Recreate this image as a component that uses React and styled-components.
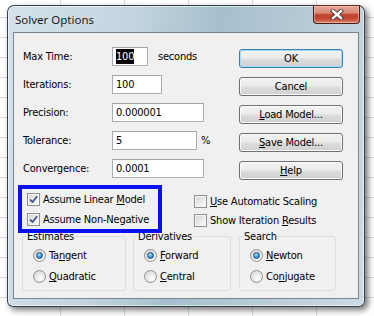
import React from "react";
import styled, { createGlobalStyle } from "styled-components";

const Global = createGlobalStyle`
  html, body { margin: 0; padding: 0; width: 374px; height: 316px; overflow: hidden; }
  body {
    background-color: #ffffff;
    background-image:
      linear-gradient(to right, #dadcdd 1px, transparent 1px),
      linear-gradient(to bottom, #dadcdd 1px, transparent 1px);
    background-size: 64px 100%, 100% 20px;
    background-position: 60px 0, 0 17px;
    font-family: "DejaVu Sans Condensed", "Liberation Sans", Arial, sans-serif;
    font-size: 11px;
    letter-spacing: -0.2px;
    color: #000;
  }
  #root { padding: 5px 0 0 7px; }
`;

const Window = styled.div`
  width: 358px;
  height: 302px;
  box-sizing: border-box;
  border: 1px solid rgba(35, 50, 62, 0.9);
  border-radius: 7px 7px 6px 6px;
  background: linear-gradient(100deg, #d5e2ea 0%, #c3d5e0 30%, #a7bfcd 52%, #b3c8d5 70%, #cddbe4 100%);
  box-shadow: inset 0 0 0 1px rgba(255, 255, 255, 0.55), 3px 3px 6px rgba(0, 0, 0, 0.55);
  display: flex;
  flex-direction: column;
`;

const TitleBar = styled.div`
  height: 26px;
  display: flex;
  align-items: center;
  justify-content: space-between;
  padding: 0 4px 0 7px;
`;

const Title = styled.div`
  font-family: "Noto Sans", "Open Sans", sans-serif;
  font-size: 11.5px;
  letter-spacing: 0;
  color: #1b1b1b;
  padding-top: 1px;
`;

const CloseButton = styled.div`
  align-self: flex-start;
  margin-top: -1px;
  width: 47px;
  height: 19px;
  box-sizing: border-box;
  border: 1px solid #4a1d14;
  border-top-color: #6a2a1e;
  border-radius: 0 0 4px 4px;
  background: linear-gradient(#e6a897 0%, #d98b77 40%, #c4412b 52%, #c24a33 75%, #d7856b 100%);
  box-shadow: inset 0 0 0 1px rgba(255, 220, 210, 0.45);
  display: flex;
  align-items: center;
  justify-content: center;
`;

const Client = styled.div`
  flex: 1;
  margin: 0 5px 7px 5px;
  border: 1px solid #76858f;
  background: #f0f0f0;
  display: flex;
  flex-direction: column;
`;

const TopSection = styled.div`
  display: flex;
  padding: 14px 0 0 9px;
`;

const Form = styled.div`
  display: flex;
  flex-direction: column;
  gap: 9px;
`;

const FormRow = styled.div`
  display: flex;
  align-items: center;
  height: 19px;
`;

const Label = styled.div`
  width: 89px;
`;

const Input = styled.div`
  width: ${(p) => p.$w}px;
  height: 19px;
  box-sizing: border-box;
  border: 1px solid #abadb3;
  border-top-color: #a0a3aa;
  background: #fff;
  padding: 0 3px;
  display: flex;
  align-items: center;
`;

const Selected = styled.span`
  background: #000;
  color: #fff;
  line-height: 15px;
`;

const Suffix = styled.div`
  margin-left: ${(p) => p.$gap}px;
`;

const ButtonCol = styled.div`
  display: flex;
  flex-direction: column;
  gap: 9px;
  margin-left: auto;
  margin-right: 15px;
  padding-top: 2px;
`;

const Button = styled.div`
  width: 104px;
  height: 19px;
  box-sizing: border-box;
  border: 1px solid ${(p) => (p.$default ? "#3c7fb1" : "#707070")};
  border-radius: 3px;
  background: linear-gradient(#f2f2f2 0%, #ebebeb 48%, #dddddd 52%, #cfcfcf 100%);
  box-shadow: inset 0 0 0 1px ${(p) => (p.$default ? "#9fdcfa" : "#fbfbfb")};
  display: flex;
  align-items: center;
  justify-content: center;
`;

const U = styled.u`
  text-decoration: underline;
  text-underline-offset: 1px;
`;

const CheckSection = styled.div`
  position: relative;
  display: grid;
  grid-template-columns: 167px 1fr;
  margin-top: 13px;
  padding-left: 13px;
`;

const CheckCol = styled.div`
  display: flex;
  flex-direction: column;
  gap: ${(p) => p.$gap}px;
  padding-top: ${(p) => p.$top}px;
`;

const CheckRow = styled.div`
  display: flex;
  align-items: center;
  gap: 3px;
  height: 13px;
`;

const Box = styled.div`
  width: 13px;
  height: 13px;
  box-sizing: border-box;
  border: 1px solid #8e8f8f;
  background: linear-gradient(135deg, #d3d3d3 0%, #ececec 55%, #fbfbfb 100%);
  box-shadow: inset 0 0 0 1px #f7f7f7;
  flex: none;
  display: flex;
  align-items: center;
  justify-content: center;
`;

const Highlight = styled.div`
  position: absolute;
  left: 4px;
  top: -8px;
  width: 144px;
  height: 48px;
  box-sizing: border-box;
  border: 4px solid #0b10f2;
  z-index: 2;
  pointer-events: none;
`;

const GroupRow = styled.div`
  display: flex;
  margin-top: 3px;
  padding-left: 8px;
`;

const Group = styled.fieldset`
  margin: 0 ${(p) => p.$after}px 0 0;
  padding: 0;
  width: ${(p) => p.$w}px;
  box-sizing: border-box;
  min-width: 0;
  border: 1px solid #d5dfe5;
  border-radius: 3px;
`;

const Legend = styled.legend`
  margin-left: 3px;
  padding: 0 1px;
  line-height: 13px;
  font-size: 11px;
`;

const RadioList = styled.div`
  display: flex;
  flex-direction: column;
  gap: 8px;
  padding: 6px 0 7px 10px;
`;

const RadioRow = styled.div`
  display: flex;
  align-items: center;
  gap: 3px;
  height: 13px;
`;

const Radio = styled.div`
  width: 13px;
  height: 13px;
  box-sizing: border-box;
  border-radius: 50%;
  border: 1px solid #8e8f8f;
  background: radial-gradient(circle at 65% 70%, #ffffff 0%, #e6e6e6 55%, #cfcfcf 100%);
  flex: none;
  display: flex;
  align-items: center;
  justify-content: center;
`;

const Dot = styled.div`
  width: 7px;
  height: 7px;
  border-radius: 50%;
  box-sizing: border-box;
  border: 1px solid #1b4f80;
  background: radial-gradient(circle at 40% 35%, #b5e6ff 0%, #47a6e6 45%, #125c9c 100%);
`;

const CheckMark = () => (
  <svg width="11" height="11" viewBox="0 0 11 11">
    <path d="M2 5.5 L4.5 8 L9.2 2.3" fill="none" stroke="#3a4f8c" strokeWidth="1.7" />
  </svg>
);

const CloseX = () => (
  <svg width="14" height="11" viewBox="0 0 14 11">
    <path d="M3 2 L11 9 M11 2 L3 9" stroke="#3a3a3a" strokeWidth="4.2" strokeLinecap="square" />
    <path d="M3 2 L11 9 M11 2 L3 9" stroke="#ffffff" strokeWidth="2.4" strokeLinecap="square" />
  </svg>
);

const Check = ({ checked, children }) => (
  <CheckRow>
    <Box>{checked && <CheckMark />}</Box>
    <span>{children}</span>
  </CheckRow>
);

const Option = ({ on, children }) => (
  <RadioRow>
    <Radio>{on && <Dot />}</Radio>
    <span>{children}</span>
  </RadioRow>
);

export default function App() {
  return (
    <>
      <Global />
      <Window>
        <TitleBar>
          <Title>Solver Options</Title>
          <CloseButton>
            <CloseX />
          </CloseButton>
        </TitleBar>
        <Client>
          <TopSection>
            <Form>
              <FormRow>
                <Label>Max Time:</Label>
                <Input $w={36}>
                  <Selected>100</Selected>
                </Input>
                <Suffix $gap={10}>seconds</Suffix>
              </FormRow>
              <FormRow>
                <Label>Iterations:</Label>
                <Input $w={50}>100</Input>
              </FormRow>
              <FormRow>
                <Label>Precision:</Label>
                <Input $w={92}>0.000001</Input>
              </FormRow>
              <FormRow>
                <Label>Tolerance:</Label>
                <Input $w={85}>5</Input>
                <Suffix $gap={4}>%</Suffix>
              </FormRow>
              <FormRow>
                <Label>Convergence:</Label>
                <Input $w={92}>0.0001</Input>
              </FormRow>
            </Form>
            <ButtonCol>
              <Button $default>OK</Button>
              <Button>Cancel</Button>
              <Button>
                <span><U>L</U>oad Model...</span>
              </Button>
              <Button>
                <span><U>S</U>ave Model...</span>
              </Button>
              <Button>
                <span><U>H</U>elp</span>
              </Button>
            </ButtonCol>
          </TopSection>
          <CheckSection>
            <Highlight />
            <CheckCol $gap={7} $top={0}>
              <Check checked>
                Assume Linear <U>M</U>odel
              </Check>
              <Check checked>Assume Non-Negative</Check>
            </CheckCol>
            <CheckCol $gap={6} $top={2}>
              <Check>
                <U>U</U>se Automatic Scaling
              </Check>
              <Check>
                Show Iteration <U>R</U>esults
              </Check>
            </CheckCol>
          </CheckSection>
          <GroupRow>
            <Group $w={104} $after={7}>
              <Legend>Estimates</Legend>
              <RadioList>
                <Option on>
                  Ta<U>n</U>gent
                </Option>
                <Option>
                  <U>Q</U>uadratic
                </Option>
              </RadioList>
            </Group>
            <Group $w={98} $after={8}>
              <Legend>Derivatives</Legend>
              <RadioList>
                <Option on>
                  <U>F</U>orward
                </Option>
                <Option>
                  <U>C</U>entral
                </Option>
              </RadioList>
            </Group>
            <Group $w={97} $after={0}>
              <Legend>Search</Legend>
              <RadioList>
                <Option on>
                  <U>N</U>ewton
                </Option>
                <Option>
                  Co<U>n</U>jugate
                </Option>
              </RadioList>
            </Group>
          </GroupRow>
        </Client>
      </Window>
    </>
  );
}
